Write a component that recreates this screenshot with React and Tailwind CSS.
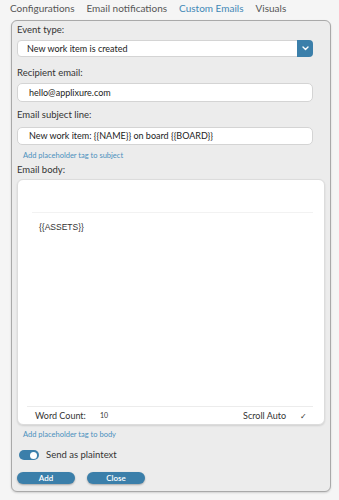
import React from 'react';

const tabs = [
  { label: 'Configurations' },
  { label: 'Email notifications' },
  { label: 'Custom Emails', active: true },
  { label: 'Visuals' },
];

const Label = ({ children, className = '' }) => (
  <div className={`h-[12px] leading-[12px] text-[9.5px] text-[#333] ${className}`}>{children}</div>
);

const TextInput = ({ value, className = '' }) => (
  <div
    className={`w-[296px] bg-white border border-[#d4d4d4] rounded-[5px] flex items-center pl-[11px] text-[9px] text-[#222] ${className}`}
  >
    {value}
  </div>
);

const App = () => {
  return (
    <div className="w-[339px] h-[500px] bg-[#f5f5f5] font-['Lato','Open_Sans',sans-serif] overflow-hidden">
      {/* Tabs */}
      <div className="h-[16px] flex items-center gap-[12px] pl-[10px] mb-[4px]">
        {tabs.map((t) => (
          <span
            key={t.label}
            className={`text-[10px] leading-none ${t.active ? 'text-[#3f88b5]' : 'text-[#555]'}`}
          >
            {t.label}
          </span>
        ))}
      </div>

      {/* Panel */}
      <div className="ml-[11px] w-[320px] bg-[#ececec] border border-[#a9a9a9] rounded-[6px] px-[5px] pt-[3px] pb-[7px] shadow-[0_1px_2px_rgba(0,0,0,0.15)]">
        <Label>Event type:</Label>
        <div className="mt-[4px] w-[296px] h-[17px] bg-white border border-[#d4d4d4] rounded-[4px] flex items-center">
          <span className="flex-1 pl-[9px] text-[9px] text-[#222]">New work item is created</span>
          <div className="w-[16px] h-[17px] -my-px -mr-px bg-[#3b7faa] rounded-r-[4px] flex items-center justify-center">
            <svg width="7" height="5" viewBox="0 0 7 5" fill="none">
              <path d="M1 1l2.5 2.5L6 1" stroke="white" strokeWidth="1.4" strokeLinecap="round" strokeLinejoin="round" />
            </svg>
          </div>
        </div>

        <Label className="mt-[10px]">Recipient email:</Label>
        <TextInput value="hello@applixure.com" className="mt-[4px] h-[19px]" />

        <Label className="mt-[7px]">Email subject line:</Label>
        <TextInput value="New work item: {{NAME}} on board {{BOARD}}" className="mt-[6px] h-[18px]" />

        <div className="mt-[6px] h-[10px] leading-[10px] text-[7.5px] text-[#4a90bd] pl-[6px]">
          Add placeholder tag to subject
        </div>

        <Label className="mt-[3px]">Email body:</Label>
        <div className="mt-[3px] w-[308px] h-[246px] bg-white border border-[#dcdcdc] rounded-[6px] shadow-[0_1px_2px_rgba(0,0,0,0.12)] flex flex-col">
          <div className="h-[32px]" />
          <div className="ml-[14px] mr-[11px] border-t border-[#f2f2f2]" />
          <div className="mt-[8px] ml-[21px] text-[8.5px] font-['Liberation_Sans',Arial,sans-serif] text-[#333]">
            {'{{ASSETS}}'}
          </div>
          <div className="flex-1" />
          <div className="ml-[9px] mr-[11px] border-t border-[#ececec]" />
          <div className="h-[17px] flex items-center pl-[17px] pr-[17px] text-[#333]">
            <span className="text-[9px] w-[65px]">Word Count:</span>
            <span className="text-[7px]">10</span>
            <span className="flex-1" />
            <span className="text-[9px]">Scroll Auto</span>
            <span className="ml-[14px] text-[8px] leading-none">✓</span>
          </div>
        </div>

        <div className="mt-[5px] h-[10px] leading-[10px] text-[7.5px] text-[#4a90bd] pl-[6px]">
          Add placeholder tag to body
        </div>

        <div className="mt-[8px] h-[14px] flex items-center pl-[2px] gap-[7px]">
          <div className="w-[20px] h-[10px] rounded-full bg-[#3b7faa] flex items-center justify-end pr-[2px]">
            <div className="w-[7px] h-[7px] rounded-full bg-white" />
          </div>
          <span className="text-[9.5px] text-[#333]">Send as plaintext</span>
        </div>

        <div className="mt-[10px] flex gap-[12px]">
          <button className="w-[58px] h-[12px] rounded-full bg-[#3b7faa] text-white text-[8px] leading-none font-semibold shadow-[0_1px_2px_rgba(0,0,0,0.3)]">
            Add
          </button>
          <button className="w-[58px] h-[12px] rounded-full bg-[#3b7faa] text-white text-[8px] leading-none font-semibold shadow-[0_1px_2px_rgba(0,0,0,0.3)]">
            Close
          </button>
        </div>
      </div>
    </div>
  );
};

export default App;
